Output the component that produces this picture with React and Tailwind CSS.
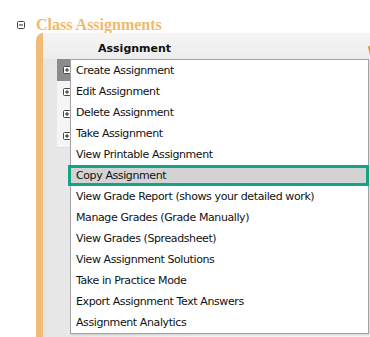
import React from 'react';

const items = [
  'Create Assignment',
  'Edit Assignment',
  'Delete Assignment',
  'Take Assignment',
  'View Printable Assignment',
  'Copy Assignment',
  'View Grade Report (shows your detailed work)',
  'Manage Grades (Grade Manually)',
  'View Grades (Spreadsheet)',
  'View Assignment Solutions',
  'Take in Practice Mode',
  'Export Assignment Text Answers',
  'Assignment Analytics',
];

function BoxIcon({ plus = false }) {
  return (
    <svg width="8" height="8" viewBox="0 0 8 8" className="block">
      <rect x="0.5" y="0.5" width="7" height="7" rx="1" fill="#fff" stroke="#444" />
      <path d="M2 4h4" stroke="#222" />
      {plus && <path d="M4 2v4" stroke="#222" />}
    </svg>
  );
}

export default function App() {
  return (
    <div
      className="w-[370px] h-[337px] overflow-hidden bg-white"
      style={{ fontFamily: '"DejaVu Sans", Verdana, sans-serif' }}
    >
      {/* section title */}
      <div className="flex items-center h-[33px] pt-[16px]">
        <div className="ml-[17px]">
          <BoxIcon />
        </div>
        <h2
          className="ml-[11px] text-[16px] font-bold leading-none text-[#f0b96d]"
          style={{ fontFamily: '"Liberation Serif", "Times New Roman", serif' }}
        >
          Class Assignments
        </h2>
      </div>

      <div className="flex ml-[36px] h-[304px]">
        <div className="w-[7px] shrink-0 bg-[#f1bc75] rounded-tl-[7px]" />
        <div className="flex-1 relative overflow-hidden bg-gradient-to-r from-[#e6e6e6] via-[#f4f4f4] to-[#f6f6f6]">
          {/* table header */}
          <div className="h-[26px] pt-[7px] bg-gradient-to-b from-[#f5f5f5] to-[#ededed]">
            <div className="flex items-center h-[19px] pl-[55px] text-[11px] font-bold text-[#111]">
              <span className="flex-1">Assignment</span>
              <svg width="5" height="9" viewBox="0 0 5 9" className="-mr-[3px] mt-[1px]">
                <path d="M0 0L2 9L3 9L1.5 0Z" fill="#d08518" />
                <path d="M2 9L3 9L5 0L3.5 0Z" fill="#1a1a1a" />
              </svg>
            </div>
          </div>

          {/* table rows behind the menu */}
          <div className="ml-[14px] mr-[2px] bg-[#f5f5f5] border-b border-[#dedede]">
            {[0, 1, 2, 3].map((i) => (
              <div
                key={i}
                className={`h-[22px] flex items-center pl-[6px] ${i === 0 ? 'bg-[#8c8c8c]' : ''}`}
              >
                <BoxIcon plus />
              </div>
            ))}
          </div>

          {/* context menu */}
          <ul className="absolute left-[27px] top-[26px] w-[299px] bg-white border border-[#a3a3a3] shadow-[1px_1px_2px_rgba(0,0,0,0.15)] text-[11px] tracking-[-0.4px] text-[#111]">
            {items.map((label) =>
              label === 'Copy Assignment' ? (
                <li
                  key={label}
                  className="h-[21px] -ml-[3px] -mr-[1px] pl-[5px] leading-[15px] bg-[#d3d3d3] border-[3px] border-[#15a387]"
                >
                  {label}
                </li>
              ) : (
                <li key={label} className="h-[21px] pl-[5px] leading-[21px] whitespace-nowrap">
                  {label}
                </li>
              )
            )}
          </ul>
        </div>
      </div>
    </div>
  );
}
